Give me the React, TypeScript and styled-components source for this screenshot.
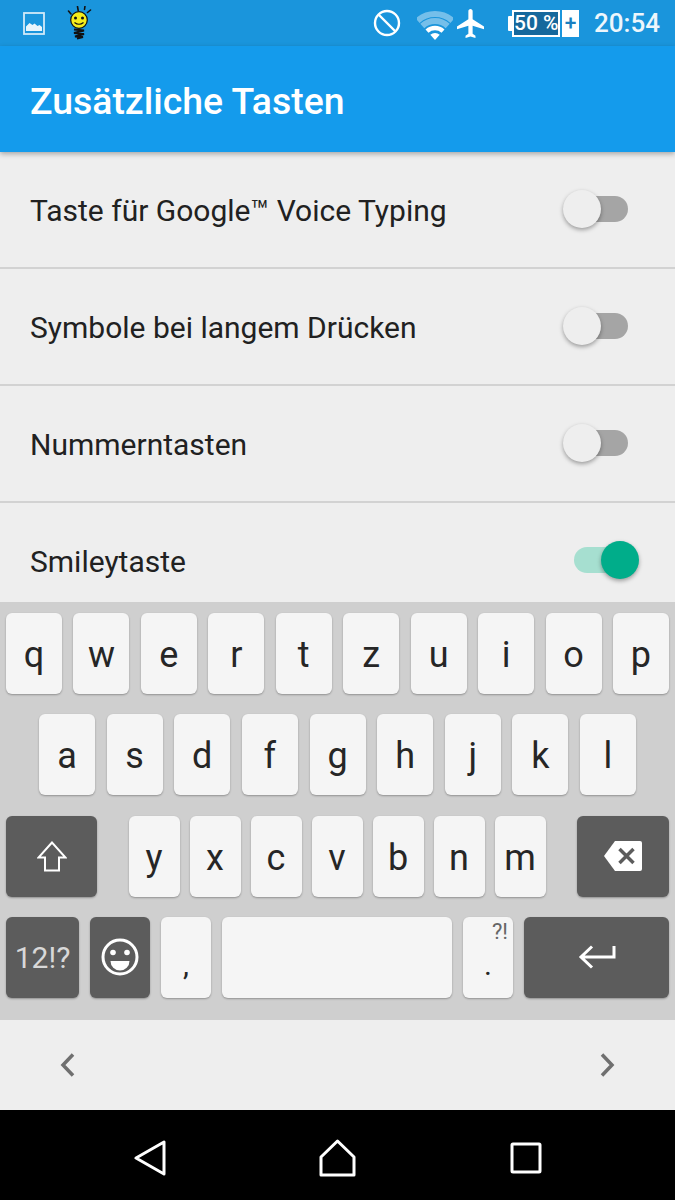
import React from "react";
import styled, { createGlobalStyle } from "styled-components";

const GlobalStyle = createGlobalStyle`
  html, body {
    margin: 0;
    padding: 0;
    background: #000;
  }
  body {
    font-family: Roboto, "Liberation Sans", sans-serif;
  }
`;

const Screen = styled.div`
  width: 675px;
  height: 1200px;
  display: flex;
  flex-direction: column;
  overflow: hidden;
`;

// status bar
const StatusBar = styled.div`
  height: 46px;
  flex: none;
  background: #1a95dc;
  display: flex;
  align-items: center;
  padding: 0 15px 0 23px;
  color: #fff;
`;

const StatusIcon = styled.svg<{ $left?: number }>`
  display: block;
  flex: none;
  margin-left: ${(p) => p.$left ?? 0}px;
`;

const Spacer = styled.div`
  flex: 1;
`;

const Battery = styled.div`
  display: flex;
  align-items: stretch;
  height: 27px;
  margin-left: 24px;
  margin-top: 1px;
`;

const BatteryNub = styled.div`
  width: 4px;
  margin: 6px 0;
  background: #fff;
  border-radius: 1px 0 0 1px;
`;

const BatteryLevel = styled.div`
  width: 48px;
  box-sizing: border-box;
  background: #16689c;
  border: 2px solid #fff;
  font-size: 21px;
  font-weight: 500;
  line-height: 23px;
  text-align: center;
  white-space: nowrap;
`;

const BatteryPlus = styled.div`
  width: 17px;
  margin-left: 2px;
  background: #fff;
  color: #1a7fc0;
  font-size: 21px;
  font-weight: 500;
  line-height: 26px;
  text-align: center;
`;

const Clock = styled.div`
  margin-left: 15px;
  font-size: 26px;
  font-weight: 500;
  opacity: 0.92;
`;

// app bar
const AppBar = styled.div`
  height: 106px;
  flex: none;
  background: #149bec;
  display: flex;
  align-items: center;
  padding: 4px 0 0 30px;
  box-sizing: border-box;
  position: relative;
  z-index: 2;
  box-shadow: 0 2px 5px rgba(0, 0, 0, 0.3);
`;

const Title = styled.h1`
  margin: 0;
  color: #fff;
  font-size: 37.4px;
  font-weight: 500;
`;

// settings list
const List = styled.div`
  height: 450px;
  flex: none;
  background: #eee;
  overflow: hidden;
`;

const Row = styled.div`
  height: 115px;
  border-bottom: 2px solid #d2d2d2;
  display: flex;
  align-items: center;
  justify-content: space-between;
  padding: 0 36px 0 30px;
`;

const RowLabel = styled.span`
  color: #212121;
  font-size: 30px;
  padding-top: 1px;
`;

const Track = styled.div<{ $on?: boolean }>`
  position: relative;
  width: 54px;
  height: 26px;
  margin-right: 11px;
  margin-top: -2px;
  border-radius: 13px;
  background: ${(p) => (p.$on ? "#a6dfd0" : "#a5a5a5")};
`;

const Thumb = styled.div<{ $on?: boolean }>`
  position: absolute;
  top: -6px;
  left: ${(p) => (p.$on ? "27px" : "-11px")};
  width: 38px;
  height: 38px;
  border-radius: 50%;
  background: ${(p) => (p.$on ? "#00ad8a" : "#eee")};
  box-shadow: 0 2px 4px rgba(0, 0, 0, 0.35);
`;

// keyboard
const Keyboard = styled.div`
  height: 418px;
  flex: none;
  box-sizing: border-box;
  background: #cfcfcf;
  padding-top: 11px;
  display: flex;
  flex-direction: column;
  gap: 20.33px;
`;

const KeyRow = styled.div<{ $inset?: number }>`
  height: 81px;
  display: flex;
  justify-content: space-between;
  padding: 0 ${(p) => p.$inset ?? 6}px;
`;

const Key = styled.div<{ $width?: number; $dark?: boolean }>`
  position: relative;
  flex: ${(p) => (p.$width ? `none` : "1")};
  width: ${(p) => (p.$width ? `${p.$width}px` : "auto")};
  max-width: ${(p) => (p.$width ? "none" : "56px")};
  display: flex;
  align-items: center;
  justify-content: center;
  padding-top: ${(p) => (p.$dark ? 0 : 3)}px;
  box-sizing: border-box;
  border-radius: 6px;
  background: ${(p) => (p.$dark ? "#5c5c5c" : "#f5f5f5")};
  color: ${(p) => (p.$dark ? "#d8d8d8" : "#262626")};
  box-shadow: 0 1px 2px rgba(0, 0, 0, 0.3);
  font-size: 36px;
`;

const KeyGroup = styled.div`
  display: flex;
  gap: 10px;
`;

const SmallLabel = styled.span`
  font-size: 30px;
`;

const LowLabel = styled.span`
  font-size: 30px;
  padding-top: 12px;
`;

const Hint = styled.span`
  position: absolute;
  top: 2px;
  right: 5px;
  font-size: 22px;
  color: #666;
`;

// suggestions strip
const Strip = styled.div`
  height: 90px;
  flex: none;
  background: #eee;
  display: flex;
  align-items: center;
  justify-content: space-between;
  padding: 0 60px;
`;

// nav bar
const NavBar = styled.div`
  height: 90px;
  flex: none;
  box-sizing: border-box;
  padding-top: 6px;
  background: #000;
  display: grid;
  grid-template-columns: repeat(3, 188px);
  justify-content: center;
  justify-items: center;
  align-items: center;
`;

function Toggle({ on }: { on?: boolean }) {
  return (
    <Track $on={on}>
      <Thumb $on={on} />
    </Track>
  );
}

function Bulb() {
  return (
    <StatusIcon $left={22} width="26" height="34" viewBox="0 0 26 34">
      <g stroke="#111" strokeLinecap="round" fill="none">
        <path d="M1.500 5l2.500 3M10.500 0.500l.7 4M18 0l-.5 3.500M23.500 4l-3 2.500" strokeWidth="1.600" />
      </g>
      <circle cx="12" cy="14" r="8.300" fill="#f4ec1c" stroke="#111" strokeWidth="1.200" />
      <circle cx="8.500" cy="12" r="1.500" fill="#111" />
      <circle cx="15.500" cy="12" r="1.500" fill="#111" />
      <path d="M7.500 16.500q4.500 3.500 9 0" stroke="#111" strokeWidth="1.200" fill="none" />
      <path d="M7 23.500l10 1-10 2.500 10 1-9 2.500 8 .5-6 1.500" stroke="#111" strokeWidth="2" fill="none" />
    </StatusIcon>
  );
}

const keyRow1 = ["q", "w", "e", "r", "t", "z", "u", "i", "o", "p"];
const keyRow2 = ["a", "s", "d", "f", "g", "h", "j", "k", "l"];
const keyRow3 = ["y", "x", "c", "v", "b", "n", "m"];

export default function App() {
  return (
    <Screen>
      <GlobalStyle />
      <StatusBar>
        <StatusIcon width="22" height="23" viewBox="0 0 22 23">
          <rect x="1" y="1" width="20" height="21" fill="none" stroke="#fff" strokeOpacity="0.8" strokeWidth="1.800" />
          <path d="M3 19v-4.500l3.500-3.500 3 2 2-1.500 3 2.500 2-1 2.500 2v4z" fill="#fff" fillOpacity="0.9" />
        </StatusIcon>
        <Bulb />
        <Spacer />
        <StatusIcon width="28" height="28" viewBox="0 0 28 28">
          <circle cx="14" cy="14" r="12" fill="none" stroke="#fff" strokeWidth="2.400" />
          <path d="M5.500 5.500l17 17" stroke="#fff" strokeWidth="2.400" />
        </StatusIcon>
        <StatusIcon $left={16} width="36" height="30" viewBox="0 0 36 30" style={{ marginTop: 4 }}>
          <g fill="none" stroke="#fff" strokeOpacity="0.4" strokeWidth="6">
            <path d="M.6 10.700A26 26 0 0 1 35.400 10.700" />
            <path d="M5.300 15.900A19 19 0 0 1 30.700 15.900" />
          </g>
          <path d="M10 21.100A12 12 0 0 1 26 21.100" fill="none" stroke="#fff" strokeWidth="4.500" />
          <path d="M18 30L13.300 24.800A7 7 0 0 1 22.700 24.800Z" fill="#fff" />
        </StatusIcon>
        <StatusIcon $left={4} width="27" height="29" viewBox="2 2 19 20" preserveAspectRatio="none">
          <path
            fill="#fff"
            d="M21 16v-2l-8-5V3.500c0-.83-.67-1.500-1.500-1.500S10 2.670 10 3.500V9l-8 5v2l8-2.500V19l-2 1.500V22l3.500-1 3.500 1v-1.500L13 19v-5.500l8 2.500z"
          />
        </StatusIcon>
        <Battery>
          <BatteryNub />
          <BatteryLevel>50 %</BatteryLevel>
          <BatteryPlus>+</BatteryPlus>
        </Battery>
        <Clock>20:54</Clock>
      </StatusBar>

      <AppBar>
        <Title>Zusätzliche Tasten</Title>
      </AppBar>

      <List>
        <Row>
          <RowLabel>Taste für Google™ Voice Typing</RowLabel>
          <Toggle />
        </Row>
        <Row>
          <RowLabel>Symbole bei langem Drücken</RowLabel>
          <Toggle />
        </Row>
        <Row>
          <RowLabel>Nummerntasten</RowLabel>
          <Toggle />
        </Row>
        <Row>
          <RowLabel>Smileytaste</RowLabel>
          <Toggle on />
        </Row>
      </List>

      <Keyboard>
        <KeyRow>
          {keyRow1.map((k) => (
            <Key key={k}>{k}</Key>
          ))}
        </KeyRow>
        <KeyRow $inset={39}>
          {keyRow2.map((k) => (
            <Key key={k}>{k}</Key>
          ))}
        </KeyRow>
        <KeyRow>
          <Key $dark $width={91}>
            <svg width="30" height="31" viewBox="0 0 30 31">
              <path d="M15 1.500L1.500 16.500h6.500v13h14v-13h6.500z" fill="none" stroke="#fff" strokeWidth="2" />
            </svg>
          </Key>
          <KeyGroup>
            {keyRow3.map((k) => (
              <Key key={k} $width={51}>
                {k}
              </Key>
            ))}
          </KeyGroup>
          <Key $dark $width={92}>
            <svg width="38" height="30" viewBox="0 0 38 30">
              <path d="M11 0h25a2 2 0 0 1 2 2v26a2 2 0 0 1-2 2H11L0 15z" fill="#fff" />
              <path d="M15.500 8l14 14M29.500 8l-14 14" stroke="#5c5c5c" strokeWidth="3.500" />
            </svg>
          </Key>
        </KeyRow>
        <KeyRow>
          <Key $dark $width={73}>
            <SmallLabel>12!?</SmallLabel>
          </Key>
          <Key $dark $width={60}>
            <svg width="40" height="40" viewBox="0 0 40 40">
              <circle cx="20" cy="20" r="17" fill="none" stroke="#fff" strokeWidth="3" />
              <circle cx="13" cy="15.500" r="2.800" fill="#fff" />
              <circle cx="27" cy="15.500" r="2.800" fill="#fff" />
              <path d="M10.500 24h19a9.500 9.500 0 0 1-19 0z" fill="#fff" />
            </svg>
          </Key>
          <Key $width={50}>
            <LowLabel>,</LowLabel>
          </Key>
          <Key $width={230} />
          <Key $width={50}>
            <LowLabel>.</LowLabel>
            <Hint>?!</Hint>
          </Key>
          <Key $dark $width={145}>
            <svg width="38" height="24" viewBox="0 0 38 24">
              <path d="M36 1v11H3M14 1.500L3 12l11 10.500" fill="none" stroke="#fff" strokeWidth="3" />
            </svg>
          </Key>
        </KeyRow>
      </Keyboard>

      <Strip>
        <svg width="15" height="24" viewBox="0 0 15 24">
          <path d="M13 1.500L3 12l10 10.500" fill="none" stroke="#6f6f6f" strokeWidth="3.500" />
        </svg>
        <svg width="15" height="24" viewBox="0 0 15 24">
          <path d="M2 1.500L12 12 2 22.500" fill="none" stroke="#6f6f6f" strokeWidth="3.500" />
        </svg>
      </Strip>

      <NavBar>
        <svg width="32" height="36" viewBox="0 0 32 36">
          <path d="M30 2v32L2 18z" fill="none" stroke="#fff" strokeWidth="3" strokeLinejoin="round" />
        </svg>
        <svg width="37" height="38" viewBox="0 0 37 38">
          <path d="M18.500 2L35 18v18H2V18z" fill="none" stroke="#fff" strokeWidth="3" strokeLinejoin="round" />
        </svg>
        <svg width="32" height="32" viewBox="0 0 32 32">
          <rect x="2" y="2" width="28" height="28" rx="1" fill="none" stroke="#fff" strokeWidth="3" />
        </svg>
      </NavBar>
    </Screen>
  );
}
